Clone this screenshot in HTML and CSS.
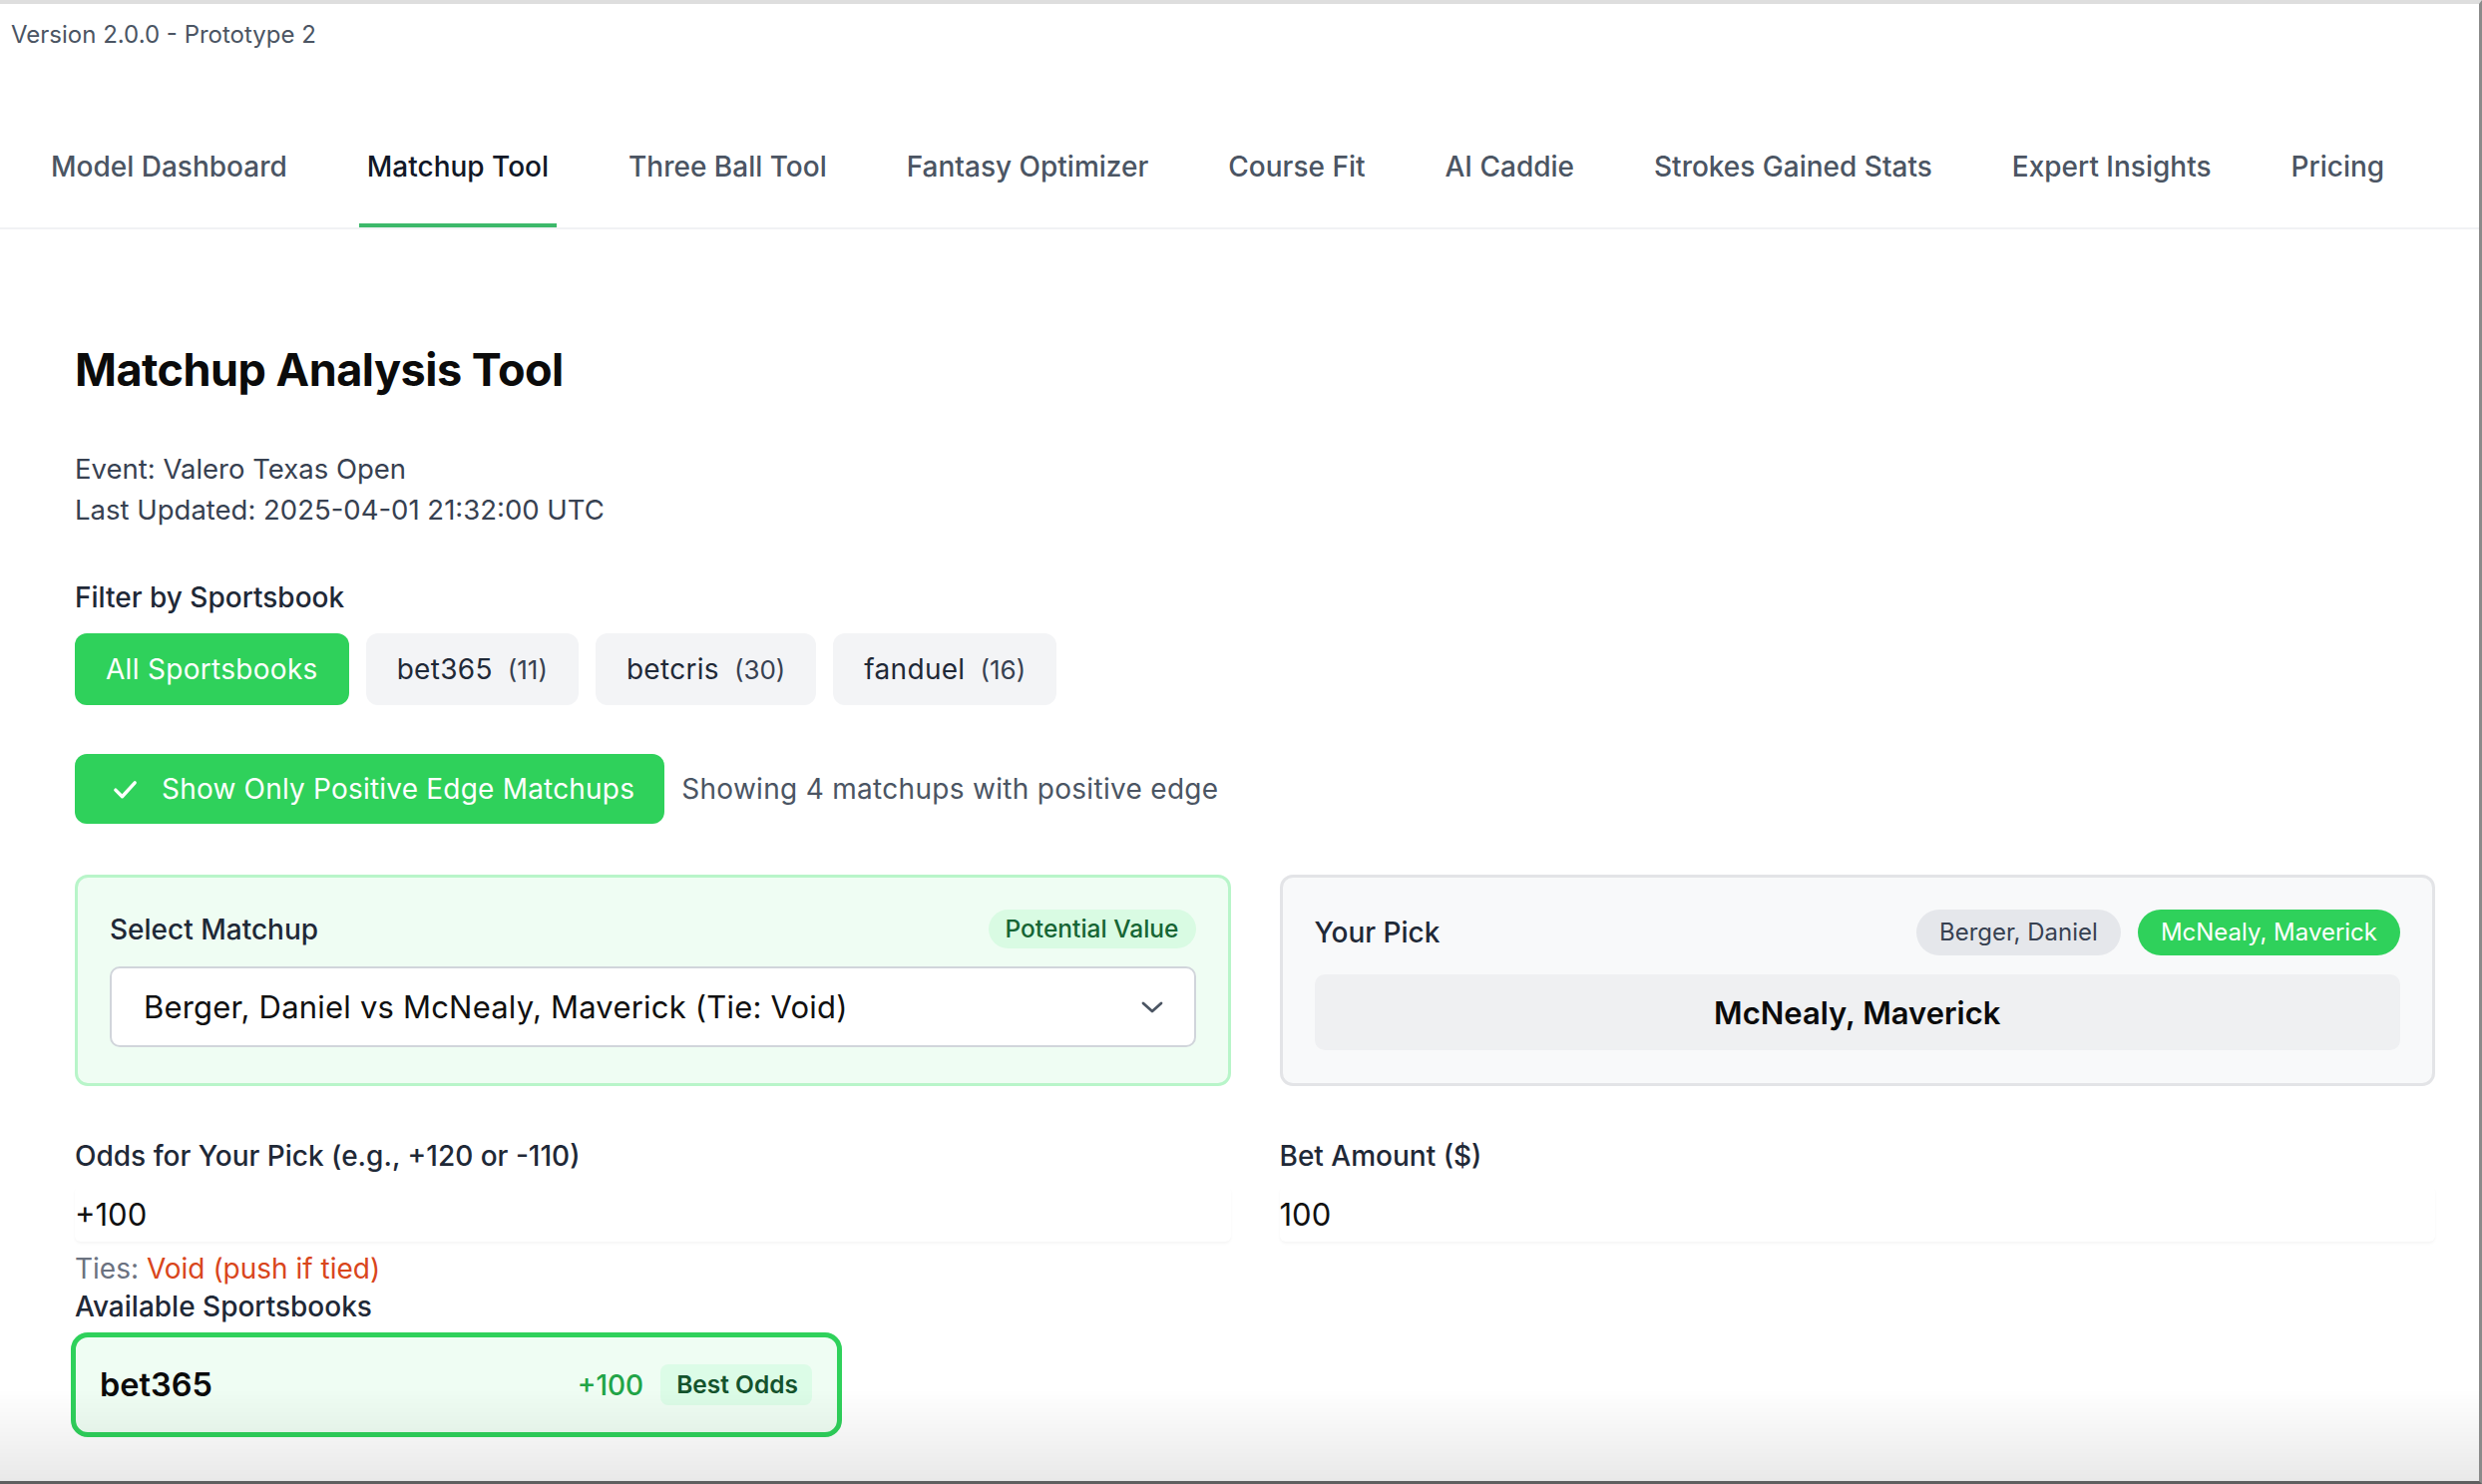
FILE: index.html
```html
<!DOCTYPE html>
<html lang="en">
<head>
<meta charset="utf-8">
<title>Matchup Analysis Tool</title>
<link rel="stylesheet" href="styles.css">
</head>
<body>
<div class="frame"></div>
<div class="version">Version 2.0.0 - Prototype 2</div>
<nav class="tabs">
  <a class="tab">Model Dashboard</a>
  <a class="tab active">Matchup Tool</a>
  <a class="tab">Three Ball Tool</a>
  <a class="tab">Fantasy Optimizer</a>
  <a class="tab">Course Fit</a>
  <a class="tab">AI Caddie</a>
  <a class="tab">Strokes Gained Stats</a>
  <a class="tab">Expert Insights</a>
  <a class="tab">Pricing</a>
</nav>
<main class="main">
  <h1 class="title">Matchup Analysis Tool</h1>
  <div class="meta">
    <div>Event: Valero Texas Open</div>
    <div>Last Updated: 2025-04-01 21:32:00 UTC</div>
  </div>
  <div class="label filter-label">Filter by Sportsbook</div>
  <div class="books">
    <button class="book active">All Sportsbooks</button>
    <button class="book">bet365<span class="count">(11)</span></button>
    <button class="book">betcris<span class="count">(30)</span></button>
    <button class="book">fanduel<span class="count">(16)</span></button>
  </div>
  <div class="edge-row">
    <button class="edge-btn">
      <svg class="check" viewBox="0 0 24 24" width="29" height="29"><polyline points="4,12.5 9.5,18 20,6.5" fill="none" stroke="#fff" stroke-width="2.8" stroke-linecap="round" stroke-linejoin="round"/></svg>
      Show Only Positive Edge Matchups
    </button>
    <span class="edge-note">Showing 4 matchups with positive edge</span>
  </div>
  <div class="grid cards">
    <section class="card card-green">
      <div class="card-head">
        <span class="label">Select Matchup</span>
        <span class="badge">Potential Value</span>
      </div>
      <div class="select">
        <span>Berger, Daniel vs McNealy, Maverick (Tie: Void)</span>
        <svg class="chev" viewBox="0 0 22 12" width="22" height="12"><polyline points="2,2 11,10 20,2" fill="none" stroke="#4b5563" stroke-width="2.8" stroke-linecap="round" stroke-linejoin="round"/></svg>
      </div>
    </section>
    <section class="card card-gray">
      <div class="card-head">
        <span class="label">Your Pick</span>
        <div class="pills">
          <span class="pill">Berger, Daniel</span>
          <span class="pill pill-on">McNealy, Maverick</span>
        </div>
      </div>
      <div class="pick">McNealy, Maverick</div>
    </section>
  </div>
  <div class="grid fields">
    <div class="field">
      <div class="label">Odds for Your Pick (e.g., +120 or -110)</div>
      <input class="input" type="text" value="+100">
      <div class="ties">Ties: <span class="void">Void (push if tied)</span></div>
      <div class="label avail">Available Sportsbooks</div>
      <div class="sb-card">
        <span class="sb-name">bet365</span>
        <span class="sb-right"><span class="sb-odds">+100</span><span class="sb-badge">Best Odds</span></span>
      </div>
    </div>
    <div class="field">
      <div class="label">Bet Amount ($)</div>
      <input class="input" type="text" value="100">
    </div>
  </div>
</main>
<div class="fade"></div>
</body>
</html>
```
FILE: styles.css
```css
* { box-sizing: border-box; }
html, body { margin: 0; padding: 0; }
body {
  font-family: Inter, "Noto Sans", Roboto, sans-serif;
  color: #111827;
  background: #fff;
  width: 2488px;
  height: 1488px;
  overflow: hidden;
}
.frame {
  position: fixed;
  inset: 0;
  border-top: 4px solid #dedede;
  border-right: 3px solid #8a8a8a;
  border-bottom: 3px solid #5f5f5f;
  pointer-events: none;
  z-index: 10;
}
.fade {
  position: fixed;
  left: 0; right: 0; bottom: 0;
  height: 95px;
  background: linear-gradient(to bottom, rgba(0,0,0,0), rgba(0,0,0,0.09));
  pointer-events: none;
  z-index: 5;
}
.version {
  padding: 19px 0 0 11px;
  font-size: 24px;
  line-height: 32px;
  color: #4b5563;
}
.tabs {
  margin-top: 59px;
  display: flex;
  gap: 64px;
  padding-left: 43px;
  border-bottom: 2px solid #f1f2f4;
}
.tab {
  padding: 37px 8px;
  font-size: 28px;
  line-height: 40px;
  color: #4b5563;
  font-weight: 500;
  border-bottom: 4px solid transparent;
}
.tab.active {
  color: #111827;
  border-bottom-color: #3cb86a;
}
.main {
  padding: 0 47px 0 75px;
}
.title {
  margin: 113px 0 0;
  font-size: 45px;
  line-height: 56px;
  font-weight: 700;
  letter-spacing: -0.5px;
  color: #0b0b0b;
}
.meta {
  margin-top: 51px;
  font-size: 27.5px;
  line-height: 41px;
  color: #374151;
}
.label {
  font-size: 28px;
  line-height: 40px;
  font-weight: 500;
  color: #1f2937;
}
.filter-label { margin-top: 47px; }
.books {
  display: flex;
  gap: 17px;
  margin-top: 16px;
}
.book {
  height: 72px;
  padding: 0 31px;
  border: none;
  border-radius: 12px;
  background: #f3f4f6;
  font-family: inherit;
  font-size: 28px;
  letter-spacing: 0.3px;
  color: #1f2937;
  display: flex;
  align-items: center;
}
.book.active {
  background: #2fd15b;
  color: #fff;
}
.count {
  font-size: 26px;
  color: #374151;
  margin-left: 15px;
  letter-spacing: 0;
}
.edge-row {
  margin-top: 49px;
  display: flex;
  align-items: center;
  gap: 17px;
}
.edge-btn {
  height: 70px;
  padding: 0 30px 0 36px;
  border: none;
  border-radius: 12px;
  background: #2fd15b;
  color: #fff;
  font-family: inherit;
  font-size: 28px;
  letter-spacing: 0.2px;
  display: flex;
  align-items: center;
  gap: 22px;
}
.edge-note {
  font-size: 28px;
  letter-spacing: 0.3px;
  color: #4b5563;
}
.grid {
  display: grid;
  grid-template-columns: 1fr 1fr;
  gap: 49px;
}
.cards { margin-top: 51px; }
.card {
  border-radius: 13px;
  border: 3px solid;
  padding: 32px 32px 0;
  height: 212px;
}
.card-green {
  background: #effdf3;
  border-color: #b8f5c9;
}
.card-gray {
  background: #f8f9fa;
  border-color: #e3e4e7;
}
.card-head {
  display: flex;
  justify-content: space-between;
  align-items: center;
  height: 39px;
}
.card-gray .card-head { height: 46px; }
.badge {
  background: #d9fbe3;
  color: #166534;
  font-size: 24.5px;
  font-weight: 500;
  line-height: 39px;
  padding: 0 17px;
  border-radius: 20px;
}
.select {
  margin-top: 18px;
  height: 81px;
  background: #fff;
  border: 2px solid #d1d5db;
  border-radius: 10px;
  display: flex;
  align-items: center;
  justify-content: space-between;
  padding: 0 31px 0 32px;
  font-size: 31px;
  letter-spacing: 0.2px;
  color: #111;
}
.pills { display: flex; gap: 17px; }
.pill {
  line-height: 46px;
  padding: 0 23px;
  border-radius: 23px;
  background: #e5e7eb;
  color: #374151;
  font-size: 24px;
}
.pill-on {
  background: #2fd15b;
  color: #fff;
}
.pick {
  margin-top: 19px;
  height: 76px;
  border-radius: 10px;
  background: #eff0f2;
  display: flex;
  align-items: center;
  justify-content: center;
  font-size: 31px;
  font-weight: 600;
  color: #0b0b0b;
}
.fields { margin-top: 50px; align-items: start; }
.field { display: flex; flex-direction: column; }
.input {
  margin-top: 10px;
  height: 56px;
  border: none;
  padding: 0;
  font-family: inherit;
  font-size: 31px;
  color: #111;
  background: #fff;
  box-shadow: 0 2px 3px rgba(0,0,0,0.04);
  border-radius: 6px;
  outline: none;
}
.ties {
  margin-top: 8px;
  font-size: 28px;
  line-height: 38px;
  color: #6b7280;
}
.void { color: #d9461c; }
.avail { line-height: 38px; }
.sb-card {
  margin: 7px 0 0 -4px;
  width: 773px;
  height: 105px;
  border: 5px solid #2fd15b;
  border-radius: 17px;
  background: #effdf3;
  display: flex;
  align-items: center;
  justify-content: space-between;
  padding: 0 25px 0 24px;
}
.sb-name {
  font-size: 32.5px;
  font-weight: 600;
  color: #0b0b0b;
}
.sb-right { display: flex; align-items: center; gap: 17px; }
.sb-odds {
  font-size: 28px;
  color: #22a447;
  font-weight: 500;
}
.sb-badge {
  background: #dcfce7;
  color: #14532d;
  font-size: 24.5px;
  font-weight: 600;
  line-height: 41px;
  padding: 0 14px 0 16px;
  border-radius: 8px;
}
```
